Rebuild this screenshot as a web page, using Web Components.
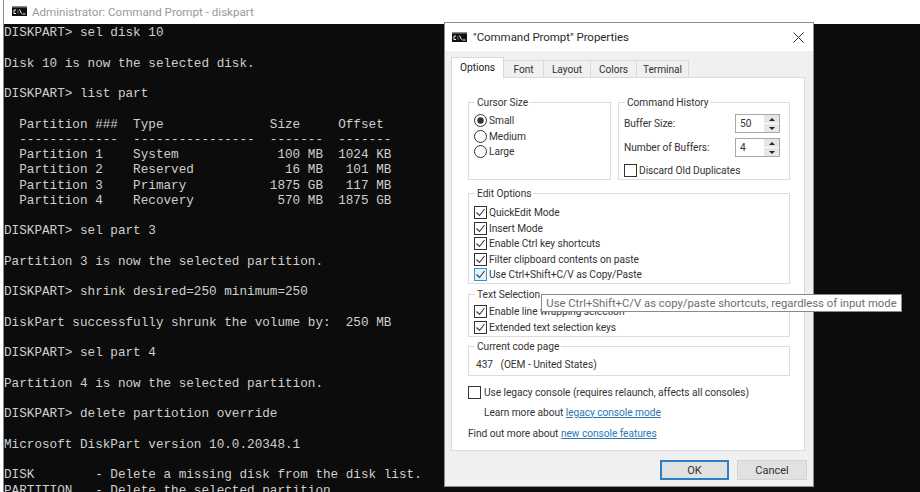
<!DOCTYPE html>
<html>
<head>
<meta charset="utf-8">
<title>Command Prompt Properties</title>
<style>
  html, body { margin: 0; height: 492px; overflow: hidden; background: #fff; }
  body { font-family: Roboto, "Liberation Sans", sans-serif; font-size: 12px; }
</style>
</head>
<body>
<console-window title-text="Administrator: Command Prompt - diskpart">DISKPART&gt; sel disk 10

Disk 10 is now the selected disk.

DISKPART&gt; list part

  Partition ###  Type              Size     Offset
  -------------  ----------------  -------  -------
  Partition 1    System             100 MB  1024 KB
  Partition 2    Reserved            16 MB   101 MB
  Partition 3    Primary           1875 GB   117 MB
  Partition 4    Recovery           570 MB  1875 GB

DISKPART&gt; sel part 3

Partition 3 is now the selected partition.

DISKPART&gt; shrink desired=250 minimum=250

DiskPart successfully shrunk the volume by:  250 MB

DISKPART&gt; sel part 4

Partition 4 is now the selected partition.

DISKPART&gt; delete partiotion override

Microsoft DiskPart version 10.0.20348.1

DISK        - Delete a missing disk from the disk list.
PARTITION   - Delete the selected partition.</console-window>

<props-dialog title-text="&quot;Command Prompt&quot; Properties">
  <div style="display:flex;gap:7px">
    <prop-group label="Cursor Size" style="width:143px;height:78px;--pad:3px 0 0 5px">
      <prop-option type="radio" checked>Small</prop-option>
      <prop-option type="radio">Medium</prop-option>
      <prop-option type="radio">Large</prop-option>
    </prop-group>
    <prop-group label="Command History" style="width:172px;height:78px;--pad:4px 9px 0 5px">
      <spin-row value="50">Buffer Size:</spin-row>
      <spin-row value="4" style="margin-top:5px">Number of Buffers:</spin-row>
      <prop-option style="margin-top:6px">Discard Old Duplicates</prop-option>
    </prop-group>
  </div>
  <prop-group label="Edit Options" style="height:91px;margin-top:13px;--pad:4px 0 0 5px">
    <prop-option checked>QuickEdit Mode</prop-option>
    <prop-option checked>Insert Mode</prop-option>
    <prop-option checked>Enable Ctrl key shortcuts</prop-option>
    <prop-option checked>Filter clipboard contents on paste</prop-option>
    <prop-option checked focused>Use Ctrl+Shift+C/V as Copy/Paste</prop-option>
  </prop-group>
  <prop-group label="Text Selection" style="height:43px;margin-top:10px;--pad:2px 0 0 5px">
    <prop-option checked>Enable line wrapping selection</prop-option>
    <prop-option checked>Extended text selection keys</prop-option>
  </prop-group>
  <prop-group label="Current code page" style="height:30px;margin-top:9px;--pad:3px 0 0 7px">437&nbsp;&nbsp;&nbsp;(OEM - United States)</prop-group>
  <prop-option style="margin-top:9px;--gap:3px">Use legacy console (requires relaunch, affects all consoles)</prop-option>
  <link-line style="margin:4px 0 0 16px" link="legacy console mode">Learn more about</link-line>
  <link-line style="margin:6px 0 0 0" link="new console features">Find out more about</link-line>
</props-dialog>

<tool-tip>Use Ctrl+Shift+C/V as copy/paste shortcuts, regardless of input mode</tool-tip>

<script>
// small console icon, used by both title bars
const CONSOLE_ICON = `
  <svg width="15" height="10" viewBox="0 0 15 10">
    <rect width="15" height="10" fill="#111"/>
    <rect x="0" y="0" width="15" height="1.5" fill="#8a8a8a"/>
    <path d="M4 4H2v3.5h2M6 4.5v.8M6 6.5v.8M7.5 3.5l2 4M10.5 8h3" fill="none" stroke="#eee" stroke-width="1"/>
  </svg>`;

class ConsoleWindow extends HTMLElement {
    constructor() {
        super();
        this.attachShadow({ mode: 'open' });
    }

    connectedCallback() {
        this.shadowRoot.innerHTML = `
            <style>
                :host {
                    display: flex;
                    flex-direction: column;
                    height: 492px;
                    padding-left: 3px;
                    box-sizing: border-box;
                    background: #fff;
                }
                .frame {
                    flex: 1;
                    min-height: 0;
                    display: flex;
                    flex-direction: column;
                    border-left: 1px solid #8c8c8c;
                }
                .bar {
                    height: 24px;
                    flex: none;
                    display: flex;
                    align-items: center;
                    gap: 5px;
                    padding-left: 8px;
                    background: #fff;
                    color: #999;
                    font: 11.6px Roboto, "Liberation Sans", sans-serif;
                }
                .bar svg { margin-top: -2px; }
                pre {
                    flex: 1;
                    margin: 0;
                    padding: 1px 0 0;
                    overflow: hidden;
                    background: #0c0c0c;
                    color: #cfcfcf;
                    font: 12.67px/15.25px "Liberation Mono", monospace;
                }
            </style>
            <div class="frame">
                <div class="bar">${CONSOLE_ICON}<span>${this.getAttribute('title-text')}</span></div>
                <pre><slot></slot></pre>
            </div>
        `;
    }
}

class PropsDialog extends HTMLElement {
    constructor() {
        super();
        this.attachShadow({ mode: 'open' });
    }

    connectedCallback() {
        const tabs = ['Options', 'Font', 'Layout', 'Colors', 'Terminal'];
        const widths = [53, 40, 47, 46, 52];
        this.shadowRoot.innerHTML = `
            <style>
                :host {
                    position: absolute;
                    left: 444px;
                    top: 22px;
                    width: 370px;
                    height: 465px;
                    box-sizing: border-box;
                    display: flex;
                    flex-direction: column;
                    border: 1px solid #8e8e8e;
                    background: #f0f0f0;
                    color: #333;
                    font: 10.2px Roboto, "Liberation Sans", sans-serif;
                    letter-spacing: -0.05px;
                }
                .title {
                    height: 28px;
                    flex: none;
                    display: flex;
                    align-items: center;
                    gap: 6px;
                    padding: 0 9px 0 7px;
                    background: #fff;
                    font-size: 11.5px;
                    color: #2b2b2b;
                }
                .title span { flex: 1; }
                .body { flex: 1; padding: 6px 8px 0 6px; display: flex; flex-direction: column; }
                .tabs { display: flex; height: 20px; align-items: flex-end; position: relative; z-index: 1; }
                .tab {
                    height: 17px;
                    box-sizing: border-box;
                    display: flex;
                    align-items: center;
                    justify-content: center;
                    border: 1px solid #d9d9d9;
                    border-left: 0;
                    border-bottom: 0;
                    background: #f0f0f0;
                }
                .tab.on {
                    height: 22px;
                    margin-bottom: -2px;
                    padding-bottom: 3px;
                    border-left: 1px solid #d9d9d9;
                    background: #fff;
                    color: #222;
                }
                .panel {
                    height: 374px;
                    box-sizing: border-box;
                    padding: 24px 14px 0 16px;
                    border: 1px solid #d9d9d9;
                    background: #fff;
                }
                .buttons { display: flex; justify-content: flex-end; gap: 8px; margin: 9px -2px 0 0; }
                button {
                    width: 70px;
                    height: 20px;
                    padding: 0;
                    box-sizing: border-box;
                    border: 1px solid #d2d2d2;
                    background: #e1e1e1;
                    color: #333;
                    font: 11px Roboto, "Liberation Sans", sans-serif;
                }
                button.default { border: 2px solid #2b7fc4; width: 69px; }
            </style>
            <div class="title">${CONSOLE_ICON}<span>${this.getAttribute('title-text')}</span>
                <svg width="11" height="11" viewBox="0 0 11 11"><path d="M.5.5l10 10M10.5.5l-10 10" stroke="#333" stroke-width="1" fill="none"/></svg>
            </div>
            <div class="body">
                <div class="tabs">
                    ${tabs.map((t, i) => `<div class="tab ${i === 0 ? 'on' : ''}" style="width:${widths[i]}px">${t}</div>`).join('')}
                </div>
                <div class="panel"><slot></slot></div>
                <div class="buttons">
                    <button class="default">OK</button>
                    <button>Cancel</button>
                </div>
            </div>
        `;
    }
}

class PropGroup extends HTMLElement {
    constructor() {
        super();
        this.attachShadow({ mode: 'open' });
    }

    connectedCallback() {
        this.shadowRoot.innerHTML = `
            <style>
                :host {
                    display: block;
                    box-sizing: border-box;
                    border: 1px solid #dcdcdc;
                }
                .label {
                    display: table;
                    margin: -7px 0 0 6px;
                    padding: 0 2px;
                    line-height: 14px;
                    background: #fff;
                }
                .content { padding: var(--pad, 0); line-height: 15.5px; }
            </style>
            <div class="label">${this.getAttribute('label')}</div>
            <div class="content"><slot></slot></div>
        `;
    }
}

class PropOption extends HTMLElement {
    constructor() {
        super();
        this.attachShadow({ mode: 'open' });
    }

    connectedCallback() {
        const radio = this.getAttribute('type') === 'radio';
        const checked = this.hasAttribute('checked');
        const stroke = this.hasAttribute('focused') ? '#3d8fc9' : '#333';
        const fill = this.hasAttribute('focused') ? '#e6f2fa' : '#fff';
        const box = radio
            ? `<circle cx="6.5" cy="6.5" r="6" fill="#fff" stroke="#333"/>${checked ? '<circle cx="6.5" cy="6.5" r="3.2" fill="#333"/>' : ''}`
            : `<rect x=".5" y=".5" width="12" height="12" fill="${fill}" stroke="${stroke}"/>${checked ? '<path d="M2.5 6.5l3 3 5-6.5" fill="none" stroke="#333" stroke-width="1.1"/>' : ''}`;
        this.shadowRoot.innerHTML = `
            <style>
                :host {
                    display: flex;
                    align-items: center;
                    gap: var(--gap, 2px);
                    height: 15.5px;
                    white-space: nowrap;
                }
                svg { flex: none; }
            </style>
            <svg width="13" height="13" viewBox="0 0 13 13">${box}</svg>
            <slot></slot>
        `;
    }
}

class SpinRow extends HTMLElement {
    constructor() {
        super();
        this.attachShadow({ mode: 'open' });
    }

    connectedCallback() {
        this.shadowRoot.innerHTML = `
            <style>
                :host {
                    display: flex;
                    justify-content: space-between;
                    align-items: center;
                    height: 19px;
                }
                .spin {
                    width: 45px;
                    height: 19px;
                    box-sizing: border-box;
                    display: flex;
                    border: 1px solid #a8a8a8;
                    background: #fff;
                }
                .value { flex: 1; padding-left: 4px; line-height: 17px; }
                .btns { width: 15px; display: flex; flex-direction: column; gap: 1px; background: #fff; }
                .btns i {
                    flex: 1;
                    background: #e6e6e6;
                    display: flex;
                    align-items: center;
                    justify-content: center;
                }
                .up::after, .down::after {
                    content: '';
                    border: 3px solid transparent;
                }
                .up::after { border-bottom-color: #222; border-top-width: 0; }
                .down::after { border-top-color: #222; border-bottom-width: 0; }
            </style>
            <span><slot></slot></span>
            <div class="spin">
                <div class="value">${this.getAttribute('value')}</div>
                <div class="btns"><i class="up"></i><i class="down"></i></div>
            </div>
        `;
    }
}

class LinkLine extends HTMLElement {
    constructor() {
        super();
        this.attachShadow({ mode: 'open' });
    }

    connectedCallback() {
        this.shadowRoot.innerHTML = `
            <style>
                :host { display: block; line-height: 15px; white-space: nowrap; }
                a { color: #2a78b5; text-decoration: underline; }
            </style>
            <slot></slot> <a href="#">${this.getAttribute('link')}</a>
        `;
    }
}

class ToolTip extends HTMLElement {
    constructor() {
        super();
        this.attachShadow({ mode: 'open' });
    }

    connectedCallback() {
        this.shadowRoot.innerHTML = `
            <style>
                :host {
                    position: absolute;
                    left: 541px;
                    top: 294px;
                    width: 361px;
                    height: 18px;
                    box-sizing: border-box;
                    display: flex;
                    align-items: center;
                    justify-content: center;
                    border: 1px solid #8a8a8a;
                    background: #fff;
                    color: #6e6e6e;
                    font: 11.3px Roboto, "Liberation Sans", sans-serif;
                    white-space: nowrap;
                }
            </style>
            <slot></slot>
        `;
    }
}

customElements.define('console-window', ConsoleWindow);
customElements.define('props-dialog', PropsDialog);
customElements.define('prop-group', PropGroup);
customElements.define('prop-option', PropOption);
customElements.define('spin-row', SpinRow);
customElements.define('link-line', LinkLine);
customElements.define('tool-tip', ToolTip);
</script>
</body>
</html>
